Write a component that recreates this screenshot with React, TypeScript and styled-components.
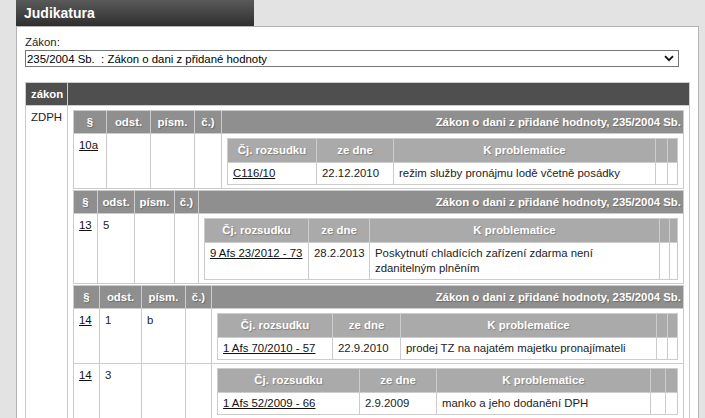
import React from "react";
import styled, { createGlobalStyle } from "styled-components";

const GlobalStyle = createGlobalStyle`
  html, body {
    margin: 0;
    padding: 0;
    background: #e3e3e3;
  }
  body {
    font-family: "Liberation Sans", Arial, sans-serif;
    font-size: 11.4px;
    color: #222;
  }
`;

const Page = styled.div`
  padding-left: 16px;
  width: 683px;
`;

const TitleBar = styled.div`
  width: 230px;
  height: 26px;
  padding-left: 8px;
  display: flex;
  align-items: center;
  background: linear-gradient(#5a5a5a, #2f2f2f);
  color: #fff;
  font-weight: bold;
  font-size: 14px;
`;

const Panel = styled.div`
  background: #fff;
  border: 1px solid #b4b4b4;
  padding: 8px 8px 8px 8px;
`;

const Label = styled.label`
  display: block;
  line-height: 14px;
  margin-bottom: 1px;
  color: #222;
`;

const SelectWrap = styled.div`
  position: relative;
  width: 654px;
  height: 17px;
`;

const Select = styled.select`
  appearance: none;
  -webkit-appearance: none;
  box-sizing: border-box;
  width: 100%;
  height: 17px;
  margin: 0;
  border: 1px solid #767676;
  border-radius: 0;
  background: #fff;
  padding: 0 1px;
  font-family: "Liberation Sans", Arial, sans-serif;
  font-size: 11.4px;
  color: #000;
  outline: none;
`;

const Chevron = styled.svg`
  position: absolute;
  right: 5px;
  top: 5px;
  pointer-events: none;
`;

const Table = styled.table`
  width: 100%;
  border-collapse: collapse;
  table-layout: fixed;
`;

const OuterTable = styled(Table)`
  margin-top: 15px;
`;

const SectionTable = styled(Table)`
  margin-bottom: 1px;
`;

const Col = styled.col<{ $w?: number }>`
  ${(p) => (p.$w ? `width: ${p.$w}px;` : "")}
`;

const OuterTh = styled.th`
  background: #4f4f4f;
  color: #fff;
  font-weight: bold;
  text-align: left;
  padding: 4px 5px 3px 5px;
  line-height: 15px;
  border: 1px solid #cccccc;
`;

const OuterTd = styled.td`
  border: 1px solid #cccccc;
  padding: 4px 5px;
  vertical-align: top;
  line-height: 15px;
`;

const SecTh = styled.th<{ $right?: boolean }>`
  background: #8f8f8f;
  color: #fff;
  font-weight: bold;
  text-align: ${(p) => (p.$right ? "right" : "center")};
  padding: ${(p) => (p.$right ? "4px 2px 3px 5px" : "4px 0 3px 0")};
  line-height: 15px;
  white-space: nowrap;
  border: 1px solid #cccccc;
  text-shadow: 1px 1px 1px rgba(0, 0, 0, 0.25);
`;

const SecTd = styled.td`
  border: 1px solid #cccccc;
  padding: 4px 5px 3px 5px;
  vertical-align: top;
  line-height: 15px;
`;

const JudgTh = styled.th`
  background: #aaaaaa;
  color: #fff;
  font-weight: bold;
  text-align: center;
  padding: 4px 0;
  line-height: 15px;
  white-space: nowrap;
  border: 1px solid #cccccc;
  text-shadow: 1px 1px 1px rgba(0, 0, 0, 0.25);
`;

const JudgTd = styled.td`
  border: 1px solid #cccccc;
  padding: 3px 5px;
  vertical-align: top;
  line-height: 15px;
`;

const Link = styled.a`
  color: #111;
  text-decoration: underline;
`;

type Judg = {
  widths: number[];
  cj: string;
  date: string;
  text: string;
};

type Row = {
  par: string;
  odst: string;
  pism: string;
  c: string;
  judg: Judg;
};

type Section = {
  widths: number[];
  rows: Row[];
};

const LAW_TITLE = "Zákon o dani z přidané hodnoty, 235/2004 Sb.";

const sections: Section[] = [
  {
    widths: [33, 44, 44, 27],
    rows: [
      {
        par: "10a",
        odst: "",
        pism: "",
        c: "",
        judg: {
          widths: [89, 77, 262, 12],
          cj: "C116/10",
          date: "22.12.2010",
          text: "režim služby pronájmu lodě včetně posádky",
        },
      },
    ],
  },
  {
    widths: [24, 37, 40, 24],
    rows: [
      {
        par: "13",
        odst: "5",
        pism: "",
        c: "",
        judg: {
          widths: [104, 61, 290, 10],
          cj: "9 Afs 23/2012 - 73",
          date: "28.2.2013",
          text: "Poskytnutí chladících zařízení zdarma není zdanitelným plněním",
        },
      },
    ],
  },
  {
    widths: [26, 42, 44, 26],
    rows: [
      {
        par: "14",
        odst: "1",
        pism: "b",
        c: "",
        judg: {
          widths: [115, 68, 256, 11],
          cj: "1 Afs 70/2010 - 57",
          date: "22.9.2010",
          text: "prodej TZ na najatém majetku pronajímateli",
        },
      },
      {
        par: "14",
        odst: "3",
        pism: "",
        c: "",
        judg: {
          widths: [142, 77, 214, 15],
          cj: "1 Afs 52/2009 - 66",
          date: "2.9.2009",
          text: "manko a jeho dodanění DPH",
        },
      },
    ],
  },
];

function JudgmentTable({ judg }: { judg: Judg }) {
  return (
    <Table>
      <colgroup>
        <Col $w={judg.widths[0]} />
        <Col $w={judg.widths[1]} />
        <Col $w={judg.widths[2]} />
        <Col $w={judg.widths[3]} />
        <Col />
      </colgroup>
      <thead>
        <tr>
          <JudgTh>Čj. rozsudku</JudgTh>
          <JudgTh>ze dne</JudgTh>
          <JudgTh>K problematice</JudgTh>
          <JudgTh />
          <JudgTh />
        </tr>
      </thead>
      <tbody>
        <tr>
          <JudgTd>
            <Link href="#">{judg.cj}</Link>
          </JudgTd>
          <JudgTd>{judg.date}</JudgTd>
          <JudgTd>{judg.text}</JudgTd>
          <JudgTd />
          <JudgTd />
        </tr>
      </tbody>
    </Table>
  );
}

function SectionBlock({ section }: { section: Section }) {
  return (
    <SectionTable>
      <colgroup>
        {section.widths.map((w, i) => (
          <Col key={i} $w={w} />
        ))}
        <Col />
      </colgroup>
      <thead>
        <tr>
          <SecTh>§</SecTh>
          <SecTh>odst.</SecTh>
          <SecTh>písm.</SecTh>
          <SecTh>č.)</SecTh>
          <SecTh $right>{LAW_TITLE}</SecTh>
        </tr>
      </thead>
      <tbody>
        {section.rows.map((r, i) => (
          <tr key={i}>
            <SecTd>
              <Link href="#">{r.par}</Link>
            </SecTd>
            <SecTd>{r.odst}</SecTd>
            <SecTd>{r.pism}</SecTd>
            <SecTd>{r.c}</SecTd>
            <SecTd>
              <JudgmentTable judg={r.judg} />
            </SecTd>
          </tr>
        ))}
      </tbody>
    </SectionTable>
  );
}

export default function App() {
  return (
    <>
      <GlobalStyle />
      <Page>
        <TitleBar>Judikatura</TitleBar>
        <Panel>
          <Label htmlFor="zakon">Zákon:</Label>
          <SelectWrap>
            <Select id="zakon" defaultValue="235">
              <option value="235">235/2004 Sb.&nbsp; : Zákon o dani z přidané hodnoty</option>
            </Select>
            <Chevron width="10" height="7" viewBox="0 0 10 7">
              <path d="M1 1.2 L5 5.2 L9 1.2" fill="none" stroke="#111" strokeWidth="1.8" />
            </Chevron>
          </SelectWrap>
          <OuterTable>
            <colgroup>
              <Col $w={42} />
              <Col />
            </colgroup>
            <thead>
              <tr>
                <OuterTh>zákon</OuterTh>
                <OuterTh />
              </tr>
            </thead>
            <tbody>
              <tr>
                <OuterTd>ZDPH</OuterTd>
                <OuterTd>
                  {sections.map((s, i) => (
                    <SectionBlock key={i} section={s} />
                  ))}
                </OuterTd>
              </tr>
            </tbody>
          </OuterTable>
        </Panel>
      </Page>
    </>
  );
}
